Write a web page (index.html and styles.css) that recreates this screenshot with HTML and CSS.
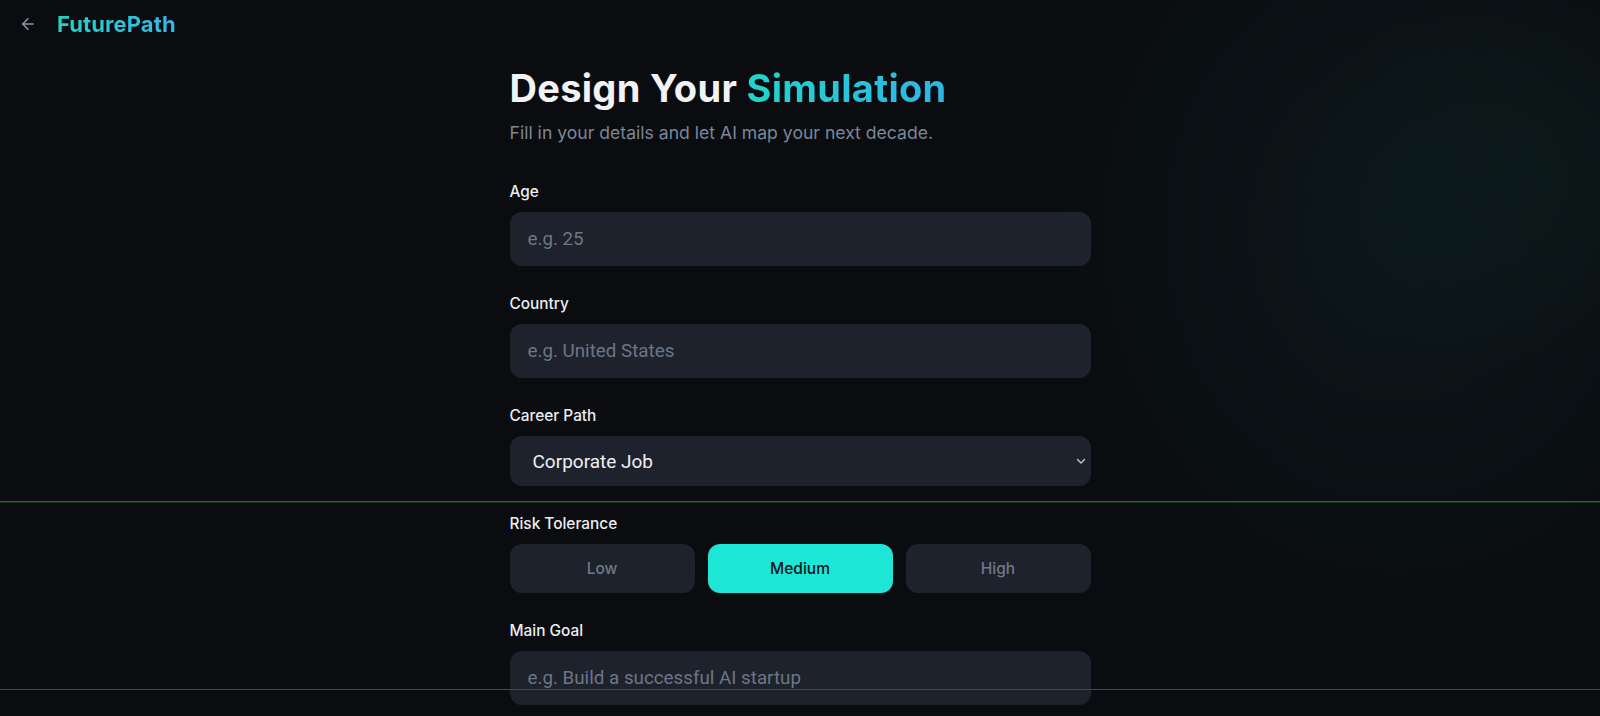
FILE: index.html
```html
<!DOCTYPE html>
<html lang="en">
<head>
<meta charset="utf-8">
<title>FuturePath - Design Your Simulation</title>
<link rel="stylesheet" href="styles.css">
</head>
<body>
<div class="glow"></div>
<header class="topbar">
  <a class="back" href="#" aria-label="Back">
    <svg width="18" height="18" viewBox="0 0 24 24" fill="none" stroke="currentColor" stroke-width="2" stroke-linecap="round" stroke-linejoin="round"><path d="M19 12H5"/><path d="M12 19l-7-7 7-7"/></svg>
  </a>
  <span class="brand">FuturePath</span>
</header>

<main class="wrap">
  <h1 class="title">Design Your <span class="accent">Simulation</span></h1>
  <p class="subtitle">Fill in your details and let AI map your next decade.</p>

  <form class="form">
    <div class="field">
      <label class="label" for="age">Age</label>
      <input class="control" id="age" type="text" placeholder="e.g. 25">
    </div>
    <div class="field">
      <label class="label" for="country">Country</label>
      <input class="control" id="country" type="text" placeholder="e.g. United States">
    </div>
    <div class="field">
      <label class="label" for="career">Career Path</label>
      <div class="select-wrap">
        <select class="control select" id="career">
          <option>Corporate Job</option>
          <option>Startup Founder</option>
          <option>Freelancer</option>
        </select>
        <svg class="chev" width="10" height="10" viewBox="0 0 10 10" fill="none" stroke="currentColor" stroke-width="1.4" stroke-linecap="round" stroke-linejoin="round"><path d="M1.5 3.5L5 7l3.5-3.5"/></svg>
      </div>
    </div>
    <div class="field">
      <span class="label">Risk Tolerance</span>
      <div class="segments">
        <button type="button" class="seg">Low</button>
        <button type="button" class="seg active">Medium</button>
        <button type="button" class="seg">High</button>
      </div>
    </div>
    <div class="field">
      <label class="label" for="goal">Main Goal</label>
      <input class="control" id="goal" type="text" placeholder="e.g. Build a successful AI startup">
    </div>
  </form>
</main>

<div class="scanline line-a"></div>
<div class="scanline line-b"></div>
</body>
</html>
```

FILE: styles.css
```css
* { box-sizing: border-box; }

html, body {
  margin: 0;
  height: 716px;
  overflow: hidden;
}

body {
  background: #0a0c0f;
  color: #e6e8ec;
  font-family: "Inter", "Noto Sans", sans-serif;
  position: relative;
}

.glow {
  position: absolute;
  inset: 0;
  pointer-events: none;
  background:
    radial-gradient(ellipse 380px 440px at 1400px 230px, rgba(14, 34, 36, 0.5), rgba(14, 34, 36, 0) 100%),
    radial-gradient(ellipse 220px 200px at 1520px 170px, rgba(14, 38, 32, 0.35), rgba(14, 38, 32, 0) 100%);
}

.topbar {
  position: relative;
  display: flex;
  align-items: center;
  gap: 20px;
  height: 48px;
  padding: 0 0 0 19px;
}

.back {
  display: flex;
  color: #8b95a4;
  text-decoration: none;
}

.brand {
  font-size: 22px;
  font-weight: 700;
  letter-spacing: 0.1px;
  background: linear-gradient(90deg, #22d3c5, #38b6e8);
  -webkit-background-clip: text;
  background-clip: text;
  color: transparent;
}

.wrap {
  position: relative;
  width: 581px;
  margin: 0 auto;
  padding-top: 20px;
}

.title {
  margin: 0;
  font-size: 38px;
  line-height: 40px;
  font-weight: 700;
  letter-spacing: 0.3px;
  color: #f1f2f4;
}

.accent {
  background: linear-gradient(90deg, #1fd6cb, #2fb4e6);
  -webkit-background-clip: text;
  background-clip: text;
  color: transparent;
}

.subtitle {
  margin: 13px 0 0;
  font-size: 17.6px;
  line-height: 24px;
  color: #7b8799;
}

.form {
  display: flex;
  flex-direction: column;
  gap: 28px;
  margin-top: 37px;
}

.field {
  display: flex;
  flex-direction: column;
  gap: 10px;
}

.label {
  font-size: 15.4px;
  line-height: 20px;
  font-weight: 500;
  color: #eceef1;
}

.control {
  width: 100%;
  height: 54px;
  border: 0;
  border-radius: 12px;
  background: #1e222c;
  color: #e6e8ec;
  padding: 0 18px;
  font-family: "Roboto", "Liberation Sans", sans-serif;
  font-size: 18.8px;
  outline: none;
}

.control::placeholder {
  color: #6c7688;
}

.select-wrap {
  position: relative;
}

.select {
  height: 50px;
  appearance: none;
  -webkit-appearance: none;
  padding-left: 23px;
  font-size: 19px;
  color: #eef0f3;
}

.chev {
  position: absolute;
  right: 5px;
  top: 20px;
  color: #c4c8d0;
  pointer-events: none;
}

.segments {
  display: grid;
  grid-template-columns: repeat(3, 1fr);
  gap: 13px;
}

.seg {
  height: 49px;
  border: 0;
  border-radius: 12px;
  background: #1e222c;
  color: #6f798a;
  font-family: "Inter", "Noto Sans", sans-serif;
  font-size: 15.5px;
  font-weight: 500;
}

.seg.active {
  background: #1de6d6;
  color: #0b1716;
}

.scanline {
  position: absolute;
  left: 0;
  right: 0;
  height: 1px;
  background: #2c6a26;
  pointer-events: none;
}

.line-a { top: 501px; box-shadow: 0 1px 0 rgba(44, 106, 38, 0.35); }
.line-b { top: 689px; background: #2a5f24; }
```
